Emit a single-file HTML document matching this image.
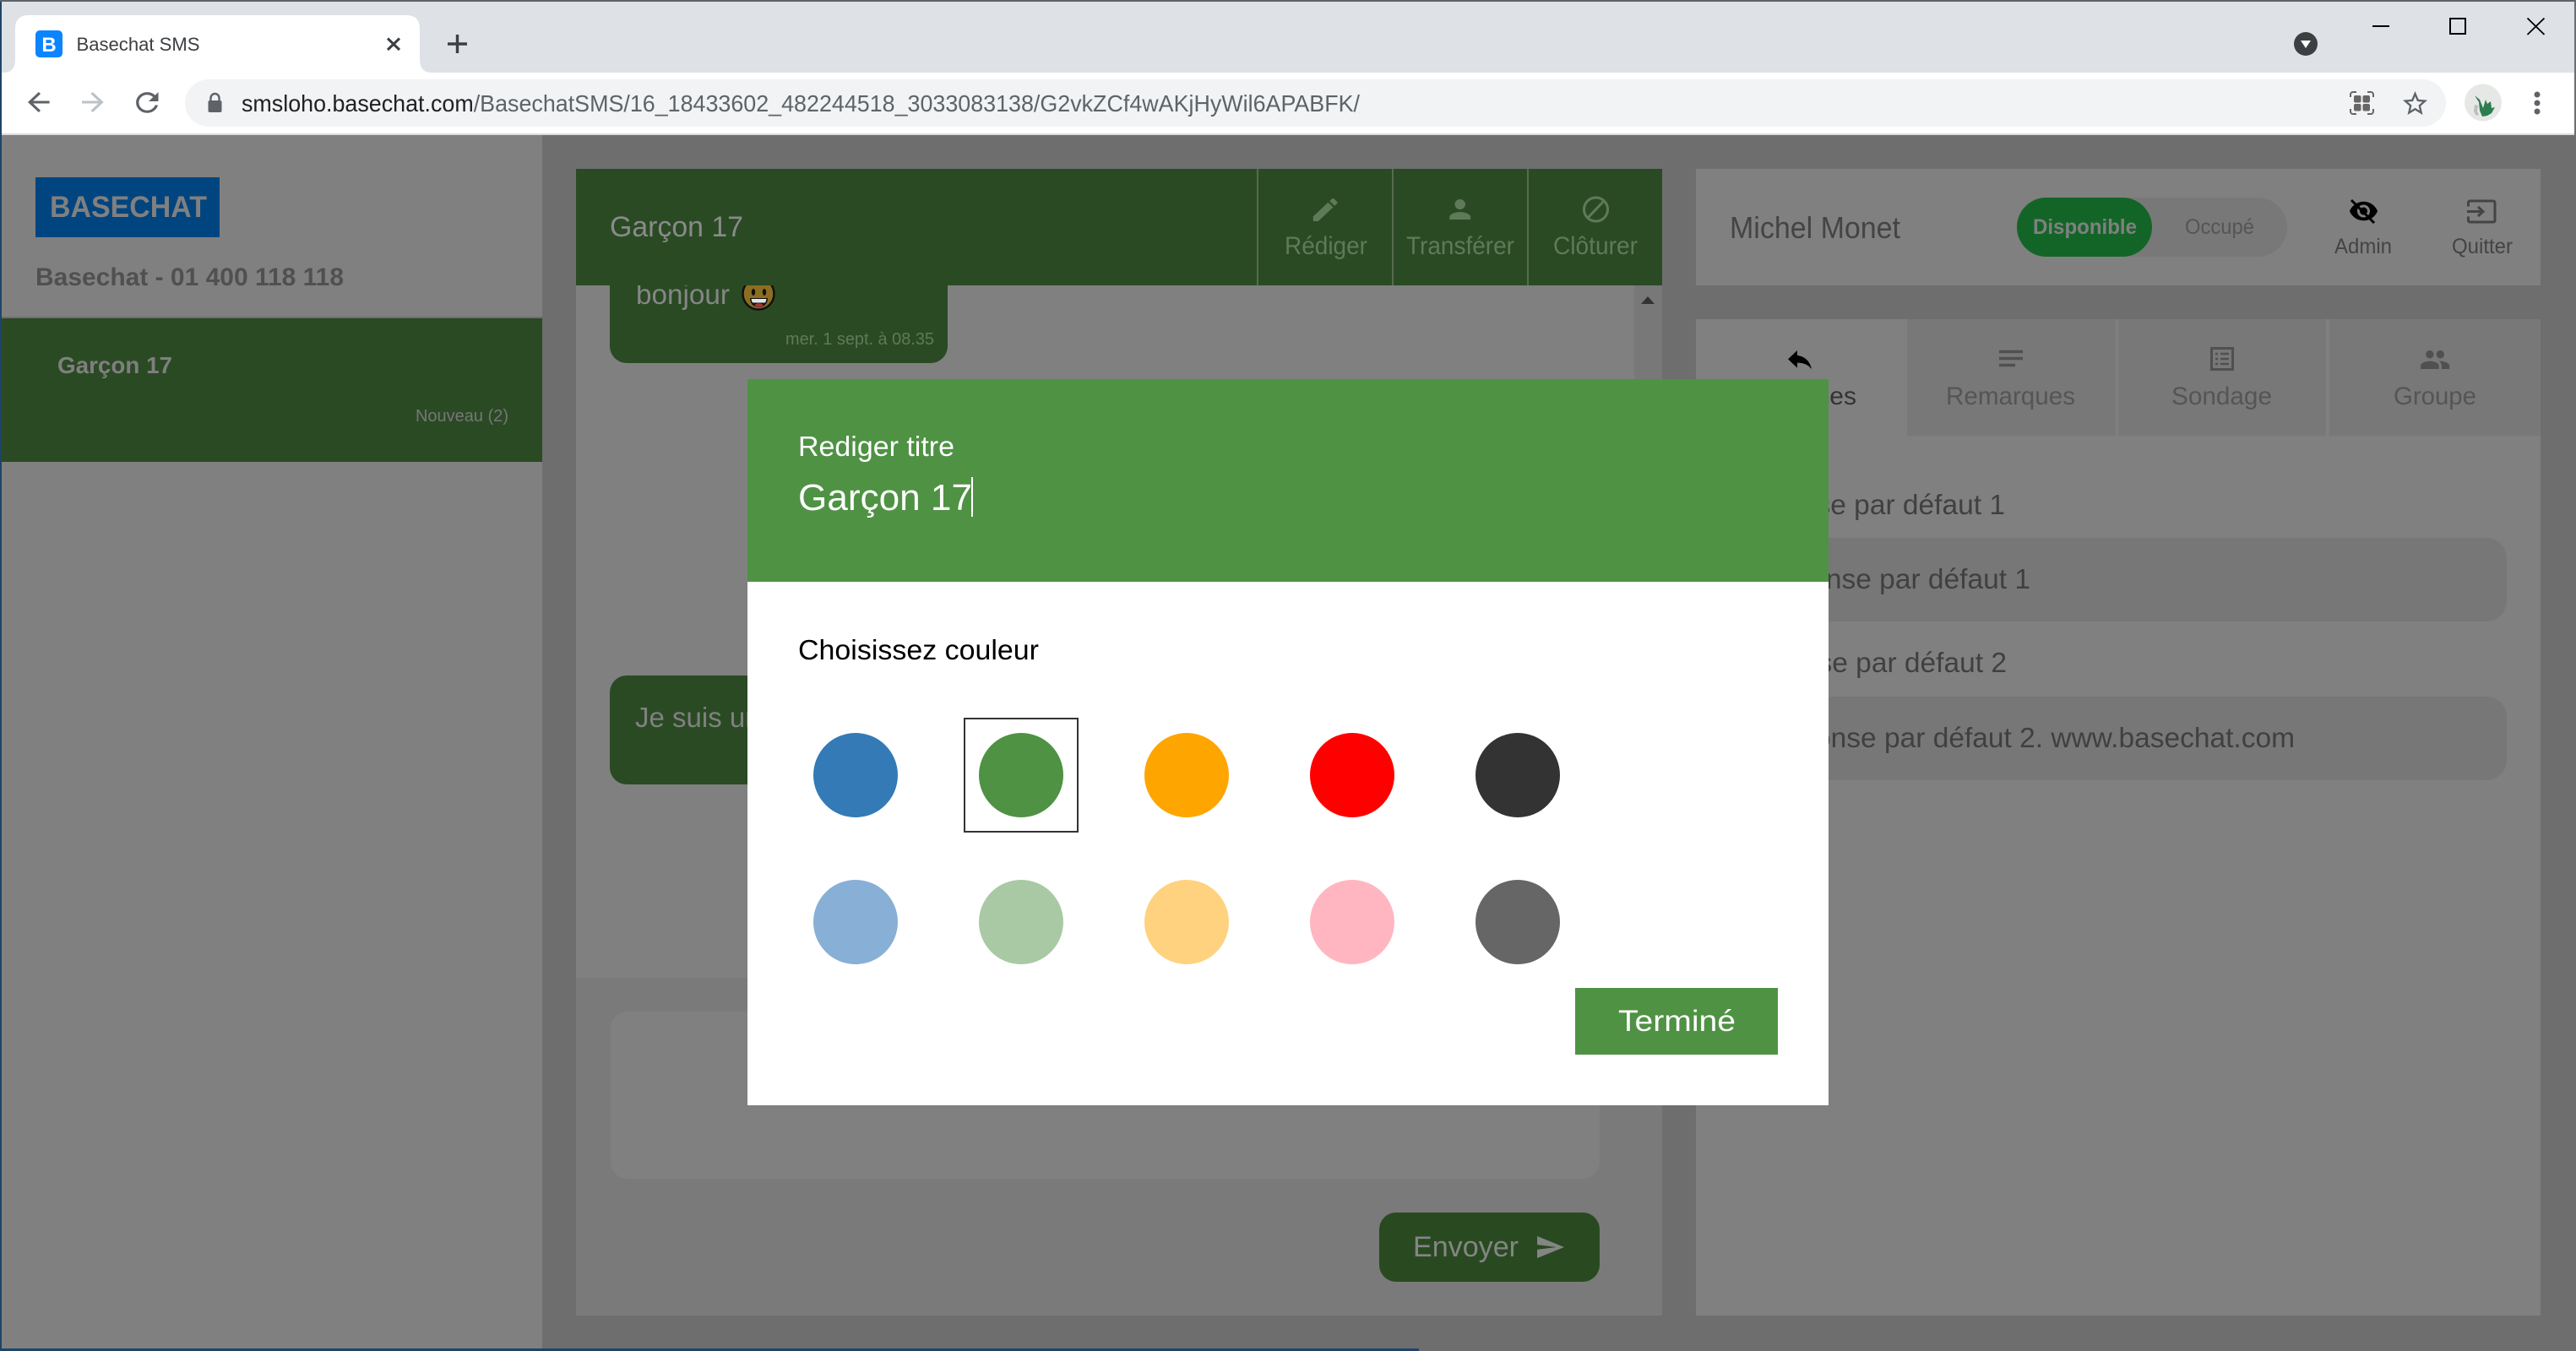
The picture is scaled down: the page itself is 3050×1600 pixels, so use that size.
<!DOCTYPE html>
<html lang="fr">
<head>
<meta charset="utf-8">
<title>Basechat SMS</title>
<style>
html,body{margin:0;padding:0;width:3050px;height:1600px;overflow:hidden;background:#6e6e6e}
svg{display:block;position:absolute;left:0;top:0}
text{font-family:"Liberation Sans",Arial,sans-serif;white-space:pre}
</style>
</head>
<body>
<svg xmlns="http://www.w3.org/2000/svg" width="3050" height="1600" viewBox="0 0 3050 1600">
<!-- page background -->
<rect x="0" y="0" width="3050" height="1600" fill="#6e6e6e"/>

<!-- sidebar -->
<rect x="2" y="160" width="640" height="1440" fill="#808080"/>
<rect x="42" y="210" width="218" height="71" fill="#00457f"/>
<text x="59" y="257" font-size="35" font-weight="700" fill="#808080" textLength="186" lengthAdjust="spacingAndGlyphs">BASECHAT</text>
<text x="42" y="338" font-size="30" font-weight="700" fill="#505050" textLength="365" lengthAdjust="spacingAndGlyphs">Basechat - 01 400 118 118</text>
<rect x="2" y="375" width="640" height="2" fill="#6e6e6e"/>
<rect x="2" y="377" width="640" height="170" fill="#2a4a24"/>
<text x="68" y="442" font-size="28" font-weight="700" fill="#7f7f7f" textLength="136" lengthAdjust="spacingAndGlyphs">Garçon 17</text>
<text x="492" y="499" font-size="20" fill="#767676" textLength="110" lengthAdjust="spacingAndGlyphs">Nouveau (2)</text>

<!-- chat panel -->
<rect x="682" y="200" width="1286" height="1358" fill="#808080"/>
<rect x="1935" y="338" width="33" height="820" fill="#787878"/>
<path d="M1951 351l8 9h-16z" fill="#333"/>

<!-- bubble 1 -->
<path d="M722 300H1122V410a20 20 0 0 1-20 20H742a20 20 0 0 1-20-20z" fill="#2a4a24"/>
<text x="753" y="360" font-size="33" fill="#868686" textLength="111" lengthAdjust="spacingAndGlyphs">bonjour</text>
<circle cx="898" cy="348" r="18.500" fill="#8c6e20" stroke="#111" stroke-width="2.500"/>
<ellipse cx="892" cy="346" rx="2.200" ry="4" fill="#111"/>
<ellipse cx="905" cy="346" rx="2.200" ry="4" fill="#111"/>
<path d="M888 353h21c0 7-5 11-10.500 11S888 360 888 353z" fill="#111"/>
<path d="M889.500 354h18q-.5 3-1.500 4.500h-15q-1-1.500-1.500-4.500z" fill="#e4e4e4"/>
<ellipse cx="898.500" cy="361.500" rx="5" ry="2.200" fill="#a33"/>
<text x="930" y="408" font-size="20" fill="#5f7a58" textLength="176" lengthAdjust="spacingAndGlyphs">mer. 1 sept. à 08.35</text>

<!-- bubble 2 -->
<rect x="722" y="800" width="500" height="129" rx="20" fill="#2a4a24"/>
<text x="752" y="861" font-size="33" fill="#808080">Je suis un message</text>

<!-- compose -->
<rect x="682" y="1158" width="1286" height="400" fill="#7a7a7a"/>
<rect x="723" y="1198" width="1171" height="198" rx="20" fill="#808080"/>
<rect x="1633" y="1436" width="261" height="82" rx="20" fill="#294a21"/>
<text x="1673" y="1488" font-size="34" fill="#858585" textLength="125" lengthAdjust="spacingAndGlyphs">Envoyer</text>
<path transform="translate(1817 1459.700) scale(1.520 1.440)" d="M2.010 21L23 12 2.010 3 2 10l15 2-15 2z" fill="#858585"/>

<!-- chat header -->
<rect x="682" y="200" width="1286" height="138" fill="#2a4a24"/>
<text x="722" y="280" font-size="34" fill="#8a8a8a" textLength="158" lengthAdjust="spacingAndGlyphs">Garçon 17</text>
<rect x="1488" y="200" width="2" height="138" fill="#566b50"/>
<rect x="1648" y="200" width="2" height="138" fill="#566b50"/>
<rect x="1808" y="200" width="2" height="138" fill="#566b50"/>
<path transform="translate(1550 230.500) scale(1.600 1.500)" d="M3 17.250V21h3.750L17.810 9.940l-3.750-3.750L3 17.250zM20.710 7.040a1 1 0 0 0 0-1.410l-2.340-2.340a1 1 0 0 0-1.410 0l-1.830 1.830 3.750 3.750 1.830-1.830z" fill="#5f7a58"/>
<path transform="translate(1710 230) scale(1.560 1.500)" d="M12 12c2.210 0 4-1.790 4-4s-1.790-4-4-4-4 1.790-4 4 1.790 4 4 4zm0 2c-2.670 0-8 1.340-8 4v2h16v-2c0-2.660-5.330-4-8-4z" fill="#5f7a58"/>
<circle cx="1889.500" cy="248" r="14" fill="none" stroke="#5f7a58" stroke-width="3"/>
<line x1="1880" y1="258" x2="1899" y2="238" stroke="#5f7a58" stroke-width="3"/>
<text x="1521" y="301" font-size="30" fill="#5f7a58" textLength="98" lengthAdjust="spacingAndGlyphs">Rédiger</text>
<text x="1665" y="301" font-size="30" fill="#5f7a58" textLength="128" lengthAdjust="spacingAndGlyphs">Transférer</text>
<text x="1839" y="301" font-size="30" fill="#5f7a58" textLength="100" lengthAdjust="spacingAndGlyphs">Clôturer</text>

<!-- right header -->
<rect x="2008" y="200" width="1000" height="138" fill="#808080"/>
<text x="2048" y="282" font-size="36" fill="#444" textLength="202" lengthAdjust="spacingAndGlyphs">Michel Monet</text>
<rect x="2388" y="234" width="320" height="70" rx="35" fill="#787878"/>
<rect x="2388" y="234" width="160" height="70" rx="35" fill="#136527"/>
<text x="2407" y="277" font-size="25" font-weight="700" fill="#808080" textLength="123" lengthAdjust="spacingAndGlyphs">Disponible</text>
<text x="2587" y="277" font-size="25" fill="#555" textLength="82" lengthAdjust="spacingAndGlyphs">Occupé</text>
<path transform="translate(2780.500 232) scale(1.500 1.500)" d="M12 4.500C7 4.500 2.730 7.610 1 12c1.730 4.390 6 7.500 11 7.500s9.270-3.110 11-7.500c-1.730-4.390-6-7.500-11-7.500zM12 17c-2.760 0-5-2.240-5-5s2.240-5 5-5 5 2.240 5 5-2.240 5-5 5zm0-8c-1.660 0-3 1.340-3 3s1.340 3 3 3 3-1.340 3-3-1.340-3-3-3z" fill="#000"/>
<line x1="2784" y1="237" x2="2811" y2="264" stroke="#000" stroke-width="3"/>
<text x="2764" y="300" font-size="25" fill="#444" textLength="68" lengthAdjust="spacingAndGlyphs">Admin</text>
<path d="M2922.500 244.500V240a2 2 0 0 1 2-2H2952a2 2 0 0 1 2 2v21a2 2 0 0 1-2 2H2924.500a2 2 0 0 1-2-2v-4.500" fill="none" stroke="#444" stroke-width="3"/>
<path d="M2921 250.500h18M2934 245l6 5.500-6 5.500" fill="none" stroke="#444" stroke-width="3"/>
<text x="2903" y="300" font-size="25" fill="#444" textLength="72" lengthAdjust="spacingAndGlyphs">Quitter</text>

<!-- right main panel -->
<rect x="2008" y="378" width="1000" height="1180" fill="#808080"/>
<rect x="2258" y="378" width="247" height="138" fill="#787878"/>
<rect x="2508" y="378" width="246" height="138" fill="#787878"/>
<rect x="2758" y="378" width="250" height="138" fill="#787878"/>
<path transform="translate(2112.400 407.700) scale(1.550 1.470)" d="M10 9V5l-7 7 7 7v-4.100c5 0 8.500 1.600 11 5.100-1-5-4-10-11-11z" fill="#000"/>
<text x="2198" y="479" font-size="30" fill="#333" text-anchor="end">Réponses</text>
<path d="M2367 416.500h28M2367 424.500h28M2367 432.500h19" stroke="#505050" stroke-width="3.500" fill="none"/>
<text x="2304" y="479" font-size="30" fill="#555" textLength="153" lengthAdjust="spacingAndGlyphs">Remarques</text>
<rect x="2618.500" y="412.500" width="25" height="25" fill="none" stroke="#505050" stroke-width="3"/>
<path d="M2623 419h3M2629 419h10M2623 425h3M2629 425h10M2623 431h3M2629 431h10" stroke="#505050" stroke-width="2.500" fill="none"/>
<text x="2571" y="479" font-size="30" fill="#555" textLength="119" lengthAdjust="spacingAndGlyphs">Sondage</text>
<path transform="translate(2864.500 407.200) scale(1.550 1.570)" d="M16 11c1.660 0 2.990-1.340 2.990-3S17.660 5 16 5c-1.660 0-3 1.340-3 3s1.340 3 3 3zm-8 0c1.660 0 2.990-1.340 2.990-3S9.660 5 8 5C6.340 5 5 6.340 5 8s1.340 3 3 3zm0 2c-2.330 0-7 1.170-7 3.500V19h14v-2.500c0-2.330-4.670-3.500-7-3.500zm8 0c-.29 0-.62.02-.97.05 1.160.84 1.970 1.970 1.970 3.450V19h6v-2.500c0-2.330-4.670-3.500-7-3.500z" fill="#505050"/>
<text x="2834" y="479" font-size="30" fill="#555" textLength="98" lengthAdjust="spacingAndGlyphs">Groupe</text>

<text x="2374" y="609" font-size="33.500" fill="#404040" text-anchor="end">Réponse par défaut 1</text>
<rect x="2048" y="637" width="920" height="99" rx="24" fill="#777"/>
<text x="2404" y="697" font-size="33.500" fill="#404040" text-anchor="end">Réponse par défaut 1</text>
<text x="2376" y="796" font-size="33.500" fill="#404040" text-anchor="end">Réponse par défaut 2</text>
<rect x="2048" y="825" width="920" height="99" rx="24" fill="#777"/>
<text x="2717" y="885" font-size="33.500" fill="#404040" text-anchor="end">Réponse par défaut 2. www.basechat.com</text>

<!-- browser chrome -->
<rect x="0" y="0" width="3050" height="86" fill="#dee1e6"/>
<rect x="0" y="0" width="3050" height="2" fill="#5f6368"/>
<path d="M4 86Q18 86 18 70V34Q18 18 34 18H481Q497 18 497 34V70Q497 86 511 86Z" fill="#fff"/>
<rect x="42" y="36" width="32" height="32" rx="5" fill="#0a84ff"/>
<text x="58" y="61" font-size="24" font-weight="700" fill="#fff" text-anchor="middle">B</text>
<text x="90.500" y="60" font-size="22" fill="#3c4043" textLength="146" lengthAdjust="spacingAndGlyphs">Basechat SMS</text>
<path d="M459 45.500l14 13.500M473 45.500l-14 13.500" stroke="#3c4043" stroke-width="3" fill="none"/>
<path d="M541.500 41v22M530 52h23" stroke="#3c4043" stroke-width="3.400" fill="none"/>
<circle cx="2730" cy="52" r="14" fill="#3c4043"/>
<path d="M2724 48h12l-6 9z" fill="#fff"/>
<rect x="2809" y="30" width="20" height="2" fill="#000"/>
<rect x="2901" y="22" width="18" height="18" fill="none" stroke="#000" stroke-width="2"/>
<path d="M2992.500 21.500l20 19.500M3012.500 21.500l-20 19.500" stroke="#000" stroke-width="1.800" fill="none"/>

<rect x="0" y="86" width="3050" height="72" fill="#fff"/>
<rect x="0" y="158" width="3050" height="2" fill="#dadce0"/>
<path transform="translate(26.600 103) scale(1.600 1.500)" d="M20 11H7.830l5.590-5.590L12 4l-8 8 8 8 1.410-1.410L7.830 13H20v-2z" fill="#5f6368"/>
<path transform="translate(90.600 103) scale(1.600 1.500)" d="M4 11h12.170l-5.590-5.590L12 4l8 8-8 8-1.410-1.410L16.170 13H4v-2z" fill="#bdc1c6"/>
<path transform="translate(154.500 103) scale(1.650 1.540)" d="M17.650 6.350C16.200 4.900 14.210 4 12 4c-4.420 0-7.990 3.580-7.990 8s3.570 8 7.990 8c3.730 0 6.840-2.550 7.730-6h-2.080c-.82 2.330-3.040 4-5.650 4-3.310 0-6-2.690-6-6s2.690-6 6-6c1.660 0 3.140.69 4.220 1.780L13 11h7V4l-2.350 2.350z" fill="#5f6368"/>
<rect x="219" y="94" width="2677" height="56" rx="28" fill="#f1f3f4"/>
<rect x="246.500" y="119" width="16" height="14" rx="2" fill="#5f6368"/>
<path d="M249.500 119v-3a5 5 0 0 1 10 0v3" fill="none" stroke="#5f6368" stroke-width="2.400"/>
<text x="286" y="132" font-size="27.500" textLength="1324" lengthAdjust="spacingAndGlyphs"><tspan fill="#202124">smsloho.basechat.com</tspan><tspan fill="#5f6368">/BasechatSMS/16_18433602_482244518_3033083138/G2vkZCf4wAKjHyWil6APABFK/</tspan></text>
<path d="M2783 115v-3a3 3 0 0 1 3-3h4M2810 115v-3a3 3 0 0 0-3-3h-4M2783 129v3a3 3 0 0 0 3 3h4M2810 129v3a3 3 0 0 1-3 3h-4" fill="none" stroke="#666" stroke-width="2"/>
<rect x="2787" y="113" width="8.500" height="8.500" rx="2" fill="#666"/>
<rect x="2797.500" y="113" width="8.500" height="8.500" rx="2" fill="#666"/>
<rect x="2787" y="123" width="8.500" height="8.500" rx="2" fill="#666"/>
<rect x="2797.500" y="123" width="8.500" height="8.500" rx="2" fill="#666"/>
<path transform="translate(2842.100 105.100) scale(1.450 1.470)" fill-rule="evenodd" d="M22 9.240l-7.190-.62L12 2 9.190 8.630 2 9.240l5.460 4.730L5.820 21 12 17.270 18.180 21l-1.630-7.030L22 9.240zM12 15.400l-3.760 2.270 1-4.280-3.320-2.880 4.380-.38L12 6.100l1.710 4.040 4.380.38-3.320 2.880 1 4.280L12 15.400z" fill="#5f6368"/>
<circle cx="2940" cy="121.500" r="22" fill="#e6e8e6"/>
<path d="M2930 113l6 5 4 10 3-10 2 5 4-3 1 8 4-1-4 7-5 3-6 1-3-7-1-10z" fill="#2e7d52"/>
<path d="M2930 124l-1 8 3 5 3-1-2-4 1-7z" fill="#bdbdbd"/>
<circle cx="3004" cy="112" r="3.500" fill="#5f6368"/>
<circle cx="3004" cy="122" r="3.500" fill="#5f6368"/>
<circle cx="3004" cy="132" r="3.500" fill="#5f6368"/>

<!-- window borders -->
<rect x="0" y="2" width="2" height="1598" fill="#1f4468"/>
<rect x="3048" y="2" width="2" height="1598" fill="#6e6e6e"/>
<rect x="0" y="1597" width="1680" height="3" fill="#1f4468"/>

<!-- modal -->
<rect x="885" y="449" width="1280" height="860" fill="#fff"/>
<rect x="885" y="449" width="1280" height="240" fill="#4f9244"/>
<text x="945" y="540" font-size="33" fill="#fff" textLength="185" lengthAdjust="spacingAndGlyphs">Rediger titre</text>
<text x="945" y="604" font-size="44" fill="#fff" textLength="206" lengthAdjust="spacingAndGlyphs">Garçon 17</text>
<rect x="1150" y="565" width="2" height="47" fill="#fff"/>
<text x="945" y="781" font-size="33" fill="#000" textLength="285" lengthAdjust="spacingAndGlyphs">Choisissez couleur</text>

<circle cx="1013" cy="918" r="50" fill="#337ab7"/>
<rect x="1142" y="851" width="134" height="134" fill="none" stroke="#333" stroke-width="2"/>
<circle cx="1209" cy="918" r="50" fill="#4f9244"/>
<circle cx="1405" cy="918" r="50" fill="#ffa500"/>
<circle cx="1601" cy="918" r="50" fill="#ff0000"/>
<circle cx="1797" cy="918" r="50" fill="#333333"/>
<circle cx="1013" cy="1092" r="50" fill="#88afd6"/>
<circle cx="1209" cy="1092" r="50" fill="#a9c9a4"/>
<circle cx="1405" cy="1092" r="50" fill="#ffd27f"/>
<circle cx="1601" cy="1092" r="50" fill="#ffb6c1"/>
<circle cx="1797" cy="1092" r="50" fill="#666666"/>

<rect x="1865" y="1170" width="240" height="79" fill="#4f9244"/>
<text x="1916" y="1221" font-size="35" fill="#fff" textLength="139" lengthAdjust="spacingAndGlyphs">Terminé</text>
</svg>
</body>
</html>
